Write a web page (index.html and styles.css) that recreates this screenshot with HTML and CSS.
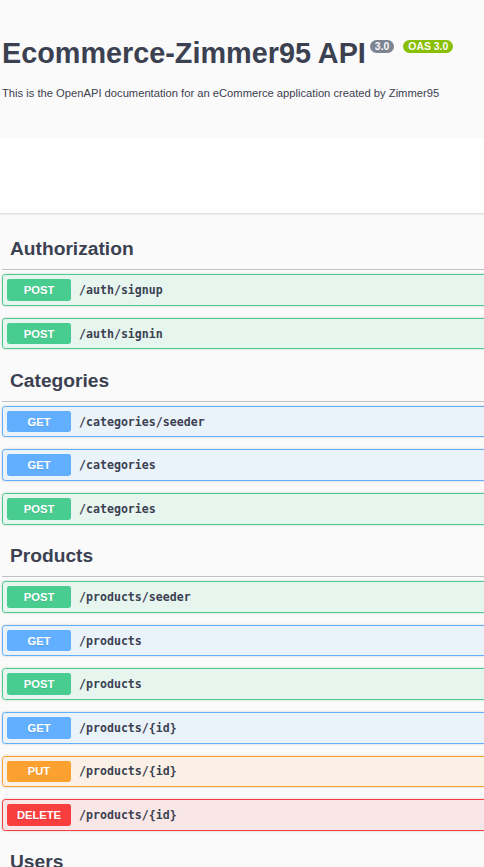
FILE: index.html
```html
<!DOCTYPE html>
<html lang="en">
<head>
<meta charset="utf-8">
<title>Ecommerce-Zimmer95 API</title>
<link rel="stylesheet" href="styles.css">
</head>
<body>
<div class="page">
  <section class="info">
    <h2 class="title"><span class="title-text">Ecommerce-Zimmer95 API</span><span class="badge badge-version">3.0</span><span class="badge badge-oas">OAS 3.0</span></h2>
    <p class="desc">This is the OpenAPI documentation for an eCommerce application created by Zimmer95</p>
  </section>
  <div class="scheme"></div>
  <div class="tags">
    <section class="tag-section">
      <h3 class="tag">Authorization</h3>
      <div class="op op-post"><span class="method">POST</span><span class="path">/auth/signup</span></div>
      <div class="op op-post"><span class="method">POST</span><span class="path">/auth/signin</span></div>
    </section>
    <section class="tag-section">
      <h3 class="tag">Categories</h3>
      <div class="op op-get"><span class="method">GET</span><span class="path">/categories/seeder</span></div>
      <div class="op op-get"><span class="method">GET</span><span class="path">/categories</span></div>
      <div class="op op-post"><span class="method">POST</span><span class="path">/categories</span></div>
    </section>
    <section class="tag-section">
      <h3 class="tag">Products</h3>
      <div class="op op-post"><span class="method">POST</span><span class="path">/products/seeder</span></div>
      <div class="op op-get"><span class="method">GET</span><span class="path">/products</span></div>
      <div class="op op-post"><span class="method">POST</span><span class="path">/products</span></div>
      <div class="op op-get"><span class="method">GET</span><span class="path">/products/{id}</span></div>
      <div class="op op-put"><span class="method">PUT</span><span class="path">/products/{id}</span></div>
      <div class="op op-delete"><span class="method">DELETE</span><span class="path">/products/{id}</span></div>
    </section>
    <section class="tag-section">
      <h3 class="tag">Users</h3>
    </section>
  </div>
</div>
</body>
</html>
```
FILE: styles.css
```css
html, body {
  margin: 0;
  padding: 0;
  background: #fafafa;
  overflow: hidden;
}

body {
  font-family: "Liberation Sans", Arial, sans-serif;
  color: #3b4151;
}

.page {
  width: 700px;
}

.info {
  padding: 37px 0 0 2px;
  margin-bottom: 38.4px;
}

.title {
  display: flex;
  align-items: flex-start;
  margin: 0;
  font-size: 28.8px;
  line-height: 33px;
  font-weight: bold;
  color: #3b4151;
}

.badge {
  display: inline-block;
  margin-top: 2.5px;
  padding: 0 5px;
  border-radius: 20px;
  font-size: 10.4px;
  line-height: 13px;
  font-weight: bold;
  color: #fafafa;
}

.badge-version {
  margin-left: 4px;
  background: #7d8492;
}

.badge-oas {
  margin-left: 9px;
  background: #89bf04;
}

.desc {
  margin: 16.6px 0 0;
  font-size: 11.2px;
  line-height: 13px;
  color: #3b4151;
}

.scheme {
  height: 74.7px;
  background: #fff;
  box-shadow: 0 1px 2px 0 rgba(0, 0, 0, 0.15);
  margin-bottom: 17px;
}

.tags {
  padding-left: 2px;
}

.tag-section {
  display: flex;
  flex-direction: column;
}

.tag {
  display: flex;
  align-items: center;
  height: 39.5px;
  margin: 0 0 4px;
  padding: 0 0 0 8px;
  border-bottom: 1px solid rgba(59, 65, 81, 0.3);
  font-size: 19.2px;
  font-weight: bold;
  color: #3b4151;
}

.op {
  display: flex;
  align-items: center;
  box-sizing: border-box;
  height: 31.6px;
  margin-bottom: 12px;
  padding: 0 4px;
  border: 1px solid;
  border-radius: 3.2px;
  box-shadow: 0 0 2.4px rgba(0, 0, 0, 0.19);
}

.method {
  display: flex;
  align-items: center;
  justify-content: center;
  width: 64px;
  height: 21.6px;
  border-radius: 2.4px;
  font-size: 11.2px;
  font-weight: bold;
  color: #fff;
  text-shadow: 0 1px 0 rgba(0, 0, 0, 0.1);
}

.path {
  padding: 0 8px;
  font-family: "DejaVu Sans Mono", "Liberation Mono", monospace;
  font-size: 11.6px;
  font-weight: bold;
  color: #3b4151;
}

.op-post {
  background: rgba(73, 204, 144, 0.1);
  border-color: #49cc90;
}
.op-post .method { background: #49cc90; }

.op-get {
  background: rgba(97, 175, 254, 0.1);
  border-color: #61affe;
}
.op-get .method { background: #61affe; }

.op-put {
  background: rgba(252, 161, 48, 0.1);
  border-color: #fca130;
}
.op-put .method { background: #fca130; }

.op-delete {
  background: rgba(249, 62, 62, 0.1);
  border-color: #f93e3e;
}
.op-delete .method { background: #f93e3e; }
```
